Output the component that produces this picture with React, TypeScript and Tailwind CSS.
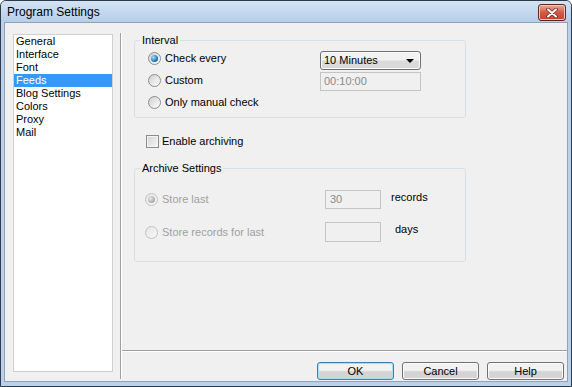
import React from "react";

const ITEMS = ["General", "Interface", "Font", "Feeds", "Blog Settings", "Colors", "Proxy", "Mail"];

function Radio({ checked, disabled }: { checked?: boolean; disabled?: boolean }) {
  return (
    <span
      className={`flex h-[13px] w-[13px] shrink-0 items-center justify-center rounded-full border ${
        disabled
          ? "border-[#c2c2c2] bg-linear-to-br from-[#e6e6e6] to-[#f7f7f7]"
          : "border-[#8c8c8c] bg-linear-to-br from-[#cfcfcf] to-[#ffffff]"
      }`}
    >
      {checked && (
        <span
          className={`h-[7px] w-[7px] rounded-full ${
            disabled
              ? "bg-[radial-gradient(circle_at_35%_35%,#e8e8e8,#a8a8a8_70%)]"
              : "bg-[radial-gradient(circle_at_35%_35%,#a8e2ff,#2a7fc4_55%,#0f3f6e)]"
          }`}
        />
      )}
    </span>
  );
}

function RadioRow({ label, checked, disabled }: { label: string; checked?: boolean; disabled?: boolean }) {
  return (
    <div className="flex h-[22px] items-center gap-[4px]">
      <Radio checked={checked} disabled={disabled} />
      <span className={disabled ? "text-[#a0a0a0]" : "text-black"}>{label}</span>
    </div>
  );
}

function Button({ label, isDefault }: { label: string; isDefault?: boolean }) {
  return (
    <div
      className={`flex h-[18px] w-[77px] items-center justify-center rounded-[3px] border ${
        isDefault
          ? "border-[#3c7fb1] shadow-[inset_0_0_0_1px_#a6def7]"
          : "border-[#707070] shadow-[inset_0_0_0_1px_#fbfbfb]"
      } bg-linear-to-b from-[#f2f2f2] from-45% to-[#d4d4d4] to-55%`}
    >
      {label}
    </div>
  );
}

export default function App() {
  return (
    <div className="flex h-[387px] w-[572px] flex-col overflow-hidden rounded-t-[6px] border border-[#2f3b48] bg-[#b9d1ea] font-['Liberation_Sans',Arial,sans-serif] text-[11px] leading-[13px] text-black">
      {/* Title bar */}
      <div className="flex h-[21px] shrink-0 items-center justify-between bg-linear-to-b from-[#d3e3f4] to-[#b6cee9] pl-[6px] pr-[5px]">
        <span className="pt-[1px] text-[12px] leading-[14px] text-black">Program Settings</span>
        <div className="mt-[2px] flex h-[17px] w-[28px] items-center justify-center rounded-[3px] border border-[#5b2a25] bg-linear-to-b from-[#e9a99b] from-0% via-[#d35a45] via-50% to-[#c4432d] shadow-[inset_0_0_0_1px_#f2c7bd]">
          <svg width="12" height="10" viewBox="0 0 12 10">
            <path d="M2 1.5 L10 8.5 M10 1.5 L2 8.5" stroke="#6b2a20" strokeWidth="3.6" strokeLinecap="round" />
            <path d="M2 1.5 L10 8.5 M10 1.5 L2 8.5" stroke="#ffffff" strokeWidth="2" strokeLinecap="round" />
          </svg>
        </div>
      </div>

      {/* Body */}
      <div className="mx-[3px] mb-[4px] flex flex-1 border border-[#8da3bb] bg-[#f0f0f0]">
        {/* List */}
        <div className="pl-[8px] pt-[11px]">
          <div className="h-[338px] w-[100px] border border-[#cfcfcf] bg-white">
            {ITEMS.map((item) => (
              <div
                key={item}
                className={`h-[13px] pl-[2px] ${item === "Feeds" ? "bg-[#3399ff] text-white" : "text-black"}`}
              >
                {item}
              </div>
            ))}
          </div>
        </div>

        {/* Vertical separator */}
        <div className="ml-[7px] mt-[10px] h-[346px] w-[2px] border-l border-r border-l-[#a0a0a0] border-r-white" />

        {/* Right side */}
        <div className="flex flex-1 flex-col">
          <div className="h-[327px] pl-[12px] pt-[11px]">
            {/* Interval group */}
            <fieldset className="h-[84px] w-[332px] rounded-[3px] border border-[#d5dfe5]">
              <legend className="ml-[5px] px-[2px] leading-[13px]">Interval</legend>
              <div className="flex pl-[13px]">
                <div className="w-[172px]">
                  <RadioRow label="Check every" checked />
                  <RadioRow label="Custom" />
                  <RadioRow label="Only manual check" />
                </div>
                <div className="mt-[4px] flex w-[101px] flex-col gap-[2px]">
                  <div className="flex h-[19px] items-center justify-between rounded-[3px] border border-[#707070] bg-linear-to-b from-[#f2f2f2] from-45% to-[#dadada] to-55% pl-[3px] pr-[6px] shadow-[inset_0_0_0_1px_#fcfcfc]">
                    <span>10 Minutes</span>
                    <svg width="8" height="4" viewBox="0 0 8 4">
                      <path d="M0 0 H8 L4 4 Z" fill="#000" />
                    </svg>
                  </div>
                  <div className="flex h-[19px] items-center border border-[#c4c4c4] bg-[#f0f0f0] pl-[3px] text-[#8a8a8a]">
                    00:10:00
                  </div>
                </div>
              </div>
            </fieldset>

            {/* Enable archiving */}
            <div className="ml-[12px] mt-[17px] flex items-center gap-[3px]">
              <span className="h-[13px] w-[13px] border border-[#8c8c8c] bg-linear-to-br from-[#d2d2d2] to-[#f8f8f8] shadow-[inset_0_0_0_1px_#f4f4f4]" />
              <span>Enable archiving</span>
            </div>

            {/* Archive settings group */}
            <fieldset className="mt-[14px] h-[100px] w-[332px] rounded-[3px] border border-[#d5dfe5]">
              <legend className="ml-[5px] px-[2px] leading-[13px]">Archive Settings</legend>
              <div className="pl-[10px]">
                <div className="mt-[13px] flex items-center">
                  <div className="w-[180px]">
                    <RadioRow label="Store last" checked disabled />
                  </div>
                  <div className="flex h-[19px] w-[56px] items-center border border-[#c4c4c4] bg-[#f0f0f0] pl-[4px] text-[#8a8a8a]">
                    30
                  </div>
                  <span className="mb-[4px] ml-[10px]">records</span>
                </div>
                <div className="mt-[11px] flex items-center">
                  <div className="w-[180px]">
                    <RadioRow label="Store records for last" disabled />
                  </div>
                  <div className="h-[20px] w-[56px] border border-[#c4c4c4] bg-[#f0f0f0]" />
                  <span className="mb-[5px] ml-[14px]">days</span>
                </div>
              </div>
            </fieldset>
          </div>

          {/* Horizontal separator */}
          <div className="h-[2px] border-b border-t border-b-white border-t-[#a0a0a0]" />

          {/* Buttons */}
          <div className="flex justify-end gap-[8px] pr-[3px] pt-[10px]">
            <Button label="OK" isDefault />
            <Button label="Cancel" />
            <Button label="Help" />
          </div>
        </div>
      </div>
    </div>
  );
}
